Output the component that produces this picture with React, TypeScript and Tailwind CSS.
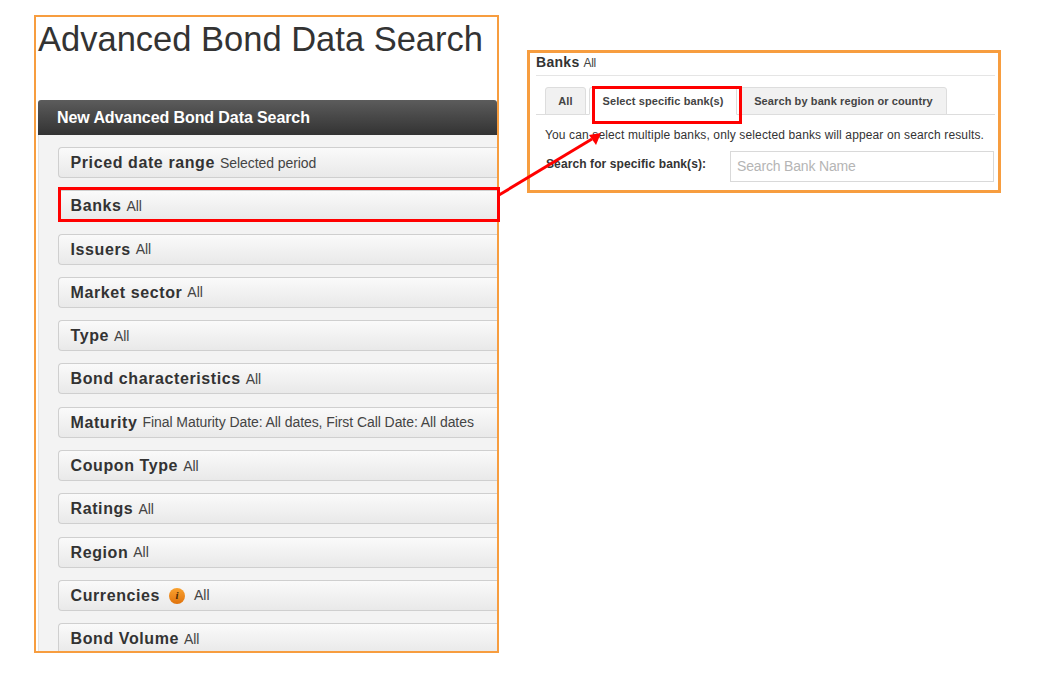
const font = { fontFamily: '"Liberation Sans", Arial, sans-serif' };

const rows: { label: string; value: string; info?: boolean }[] = [
  { label: "Priced date range", value: "Selected period" },
  { label: "Banks", value: "All" },
  { label: "Issuers", value: "All" },
  { label: "Market sector", value: "All" },
  { label: "Type", value: "All" },
  { label: "Bond characteristics", value: "All" },
  { label: "Maturity", value: "Final Maturity Date: All dates, First Call Date: All dates" },
  { label: "Coupon Type", value: "All" },
  { label: "Ratings", value: "All" },
  { label: "Region", value: "All" },
  { label: "Currencies", value: "All", info: true },
  { label: "Bond Volume", value: "All" },
];

function InfoBadge() {
  return (
    <span className="mx-[9px] inline-flex h-4 w-4 items-center justify-center rounded-full bg-gradient-to-b from-[#f9a12e] to-[#e0730a] text-[11px] font-bold italic leading-none text-[#4a2a05]" style={{ fontFamily: '"Liberation Serif", serif' }}>
      i
    </span>
  );
}

function AccordionRow({ label, value, info }: { label: string; value: string; info?: boolean }) {
  return (
    <div className="flex h-[31px] shrink-0 items-center whitespace-nowrap rounded-l-[4px] border border-r-0 border-[#cfcfcf] bg-gradient-to-b from-[#fafafa] to-[#e9e9e9] pl-[11.5px] pt-[1px] text-[#333]">
      <span className="text-[16px] font-bold tracking-[0.6px]">{label}</span>
      {info ? <InfoBadge /> : <span className="w-[5px]" />}
      <span className="text-[14px] tracking-[-0.07px] text-[#444]">{value}</span>
    </div>
  );
}

function Tab({ label, active, className }: { label: string; active?: boolean; className: string }) {
  return (
    <div
      className={
        "mt-[1px] flex h-[28px] items-center justify-center rounded-t-[3px] border border-[#dddddd] text-[11px] font-bold tracking-[0.1px] text-[#444] " +
        (active ? "border-b-white bg-white" : "bg-[#f1f1f1]") +
        " " +
        className
      }
    >
      {label}
    </div>
  );
}

export default function App() {
  return (
    <div className="relative h-[685px] w-[1046px] overflow-hidden bg-white" style={font}>
      <div className="flex items-start pl-[34px] pt-[15px]">
        {/* left capture */}
        <div className="flex h-[638px] w-[465px] shrink-0 flex-col overflow-hidden border-2 border-[#f79d3f] pl-[2px] pr-0">
          <h1 className="mt-[1px] h-[82px] shrink-0 whitespace-nowrap text-[34.5px] font-normal leading-[42px] text-[#333]">
            Advanced Bond Data Search
          </h1>
          <div className="flex h-[35px] shrink-0 items-center rounded-t-[3px] bg-gradient-to-b from-[#5c5c5c] to-[#333333] pl-[19px] text-[16px] font-bold tracking-[-0.09px] text-white">
            New Advanced Bond Data Search
          </div>
          <div className="flex flex-1 flex-col gap-[12.3px] overflow-hidden border-l border-[#e2e2e2] bg-[#f3f3f3] pl-[19px] pt-3">
            {rows.map((r) => (
              <AccordionRow key={r.label} {...r} />
            ))}
          </div>
        </div>

        {/* right capture */}
        <div className="ml-[28px] mt-[35px] h-[143px] w-[474px] shrink-0 border-[3px] border-[#f79d3f] pl-[6px] pr-[3px]">
          <div className="flex h-[23px] items-center border-b border-[#e5e5e5] pb-[3px] text-[#333]">
            <span className="text-[14px] font-bold tracking-[0.3px]">Banks</span>
            <span className="ml-[4px] text-[12px] tracking-[-0.3px] text-[#444]">All</span>
          </div>
          <div className="mt-[10px] flex h-[29px] gap-[3px] border-b border-[#dddddd] pl-[9px]">
            <Tab label="All" className="w-[41px]" />
            <Tab label="Select specific bank(s)" active className="w-[148px]" />
            <Tab label="Search by bank region or country" className="w-[207px]" />
          </div>
          <p className="mt-[13px] pl-[9px] text-[12px] leading-[14px] tracking-[0.13px] text-[#333]">
            You can select multiple banks, only selected banks will appear on search results.
          </p>
          <div className="mt-[9px] flex items-start pl-[10px]">
            <span className="mt-[4px] w-[184px] text-[12px] font-bold tracking-[0.1px] text-[#333]">Search for specific bank(s):</span>
            <div className="flex h-[31px] w-[264px] items-center border border-[#d9d9d9] pl-[6px] text-[14px] tracking-[-0.17px] text-[#b5b5b5]">
              Search Bank Name
            </div>
          </div>
        </div>
      </div>

      {/* red annotations over the captures */}
      <div className="absolute left-[58px] top-[187px] h-[35px] w-[442px] border-[3px] border-[#ff0000]" />
      <div className="absolute left-[592px] top-[86px] h-[38px] w-[150px] border-[3px] border-[#ff0000]" />
      <svg className="absolute left-0 top-0" width="1046" height="685" viewBox="0 0 1046 685" fill="none">
        <line x1="499" y1="195" x2="592" y2="139" stroke="#ff0000" strokeWidth="3" />
        <polygon points="601,133 596,145 589,135" fill="#ff0000" />
      </svg>
    </div>
  );
}
